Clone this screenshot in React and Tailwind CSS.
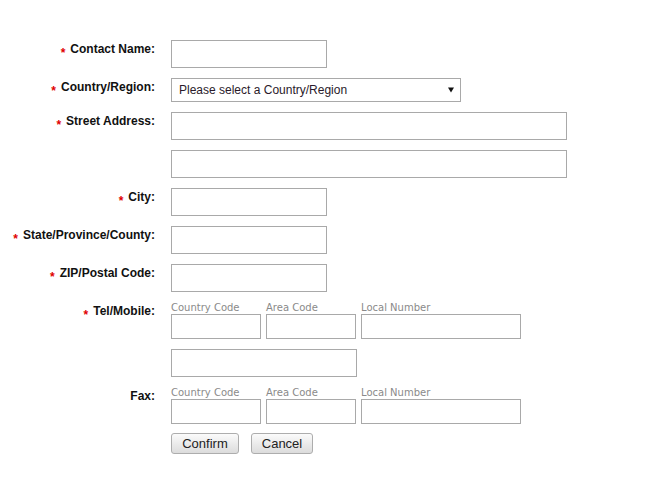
import React from "react";

const Star = () => (
  <span className="text-[#e00000] text-[12px] align-[-4px] mr-[5px]">*</span>
);

function Row({ label, req = true, children, className = "" }) {
  return (
    <div className={"flex " + className}>
      <div className="w-[155px] shrink-0 text-right pt-[2px] text-[12px] leading-[14px] font-bold text-[#111]">
        {req && <Star />}
        {label}
      </div>
      <div className="ml-[16px]">{children}</div>
    </div>
  );
}

const Box = ({ w, h = "h-[28px]" }) => (
  <div className={"border border-[#a9a9a9] bg-white " + w + " " + h}></div>
);

function Phone() {
  const cols = [
    ["Country Code", "w-[90px]"],
    ["Area Code", "w-[90px]"],
    ["Local Number", "w-[160px]"],
  ];
  return (
    <div className="flex gap-[5px]">
      {cols.map(([t, w]) => (
        <div key={t} className="flex flex-col">
          <div className="h-[12px] text-[10px] leading-[12px] text-[#8a8a8a] font-['DejaVu_Sans',sans-serif] whitespace-nowrap">
            {t}
          </div>
          <Box w={w} h="h-[25px]" />
        </div>
      ))}
    </div>
  );
}

export default function App() {
  return (
    <div className="w-[672px] h-[497px] bg-white font-['Liberation_Sans',Arial,sans-serif] pt-[40px]">
      <div className="flex flex-col gap-[10px]">
        <Row label="Contact Name:">
          <Box w="w-[156px]" />
        </Row>
        <Row label="Country/Region:">
          <div className="w-[290px] h-[24px] border border-[#a9a9a9] flex items-center justify-between pl-[7px] pr-[6px] text-[12px] text-[#2a1a2a]">
            <span>Please select a Country/Region</span>
            <svg width="6" height="6" viewBox="0 0 6 6">
              <polygon points="0,0.5 6,0.5 3,5.5" fill="#111" />
            </svg>
          </div>
        </Row>
        <Row label="Street Address:">
          <Box w="w-[396px]" />
        </Row>
        <Row label="" req={false}>
          <Box w="w-[396px]" />
        </Row>
        <Row label="City:">
          <Box w="w-[156px]" />
        </Row>
        <Row label="State/Province/County:">
          <Box w="w-[156px]" />
        </Row>
        <Row label="ZIP/Postal Code:">
          <Box w="w-[156px]" />
        </Row>
        <Row label="Tel/Mobile:">
          <Phone />
        </Row>
        <Row label="" req={false}>
          <Box w="w-[186px]" />
        </Row>
        <Row label="Fax:" req={false}>
          <Phone />
        </Row>
        <Row label="" req={false} className="-mt-[1px]">
          <div className="flex gap-[12px]">
            <button className="w-[68px] h-[21px] border border-[#adadad] rounded-[3px] bg-gradient-to-b from-[#fbfbfb] to-[#dcdcdc] text-[13px] text-[#222] leading-none">
              Confirm
            </button>
            <button className="w-[62px] h-[21px] border border-[#adadad] rounded-[3px] bg-gradient-to-b from-[#fbfbfb] to-[#dcdcdc] text-[13px] text-[#222] leading-none">
              Cancel
            </button>
          </div>
        </Row>
      </div>
    </div>
  );
}
